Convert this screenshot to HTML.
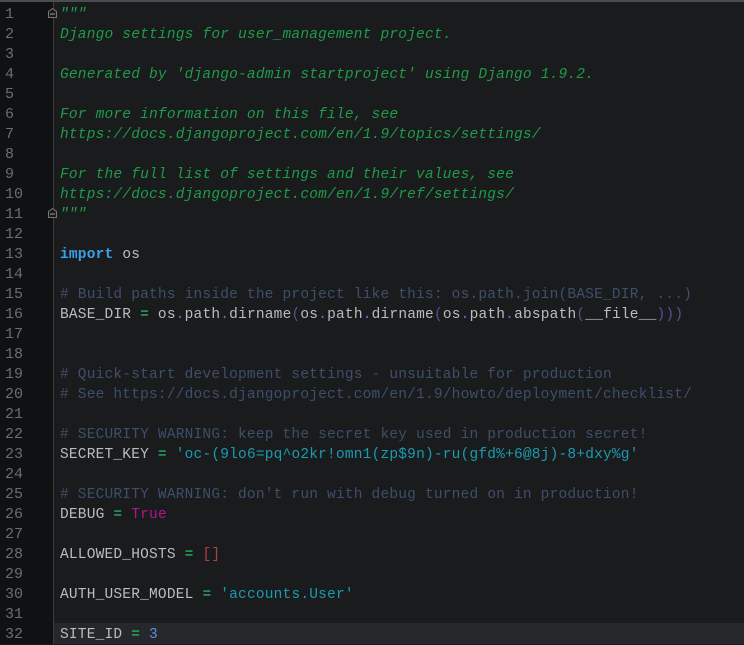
<!DOCTYPE html>
<html><head><meta charset="utf-8"><style>
html,body{margin:0;padding:0;}
body{width:744px;height:644px;background:#1a1b1d;overflow:hidden;position:relative;font-family:"Liberation Mono",monospace;font-size:14.5px;letter-spacing:0.2px;}
#top{position:absolute;left:0;top:0;width:744px;height:2px;background:#4a4d50;}
#gut{position:absolute;left:0;top:2px;width:53px;height:642px;background:#0f1112;}
#div{position:absolute;left:53px;top:2px;width:1px;height:642px;background:#3a3c3f;}
#hl{position:absolute;left:54px;top:623px;width:690px;height:21px;background:#25272b;}
.ln{position:absolute;left:5px;color:#6a6e73;height:20px;line-height:20px;margin-top:2px;font-size:15px;letter-spacing:0;}
.l{position:absolute;left:60px;height:20px;line-height:20px;white-space:pre;color:#b9bcc0;margin-top:2px;}
.d{color:#1f9b4a;font-style:italic;}
.c{color:#3d4f6a;}
.o{color:#2ecc71;}
.p{color:#3f7fcf;}
.pa{color:#5a4c9b;}
.t{color:#b3168f;}
.b{color:#b04040;}
.s{color:#1a9bb0;}
.n{color:#5a8fe0;}
.k{color:#3b9fe6;font-weight:bold;}
.fold{position:absolute;left:48px;width:9px;height:10px;}
</style></head><body>
<div id="top"></div><div id="gut"></div><div id="div"></div><div id="hl"></div>
<svg class="fold" style="top:8px" viewBox="0 0 9 10"><path d="M0.5 3.5 L4.5 0.5 L8.5 3.5 V9.5 H0.5 Z" fill="#1a1b1d" stroke="#777"/><path d="M2 6 H7" stroke="#999"/></svg>
<svg class="fold" style="top:208px" viewBox="0 0 9 10"><path d="M0.5 3.5 L4.5 0.5 L8.5 3.5 V9.5 H0.5 Z" fill="#1a1b1d" stroke="#777"/><path d="M2 6 H7" stroke="#999"/></svg>
<div class="ln" style="top:3px">1</div><div class="ln" style="top:23px">2</div><div class="ln" style="top:43px">3</div><div class="ln" style="top:63px">4</div><div class="ln" style="top:83px">5</div><div class="ln" style="top:103px">6</div><div class="ln" style="top:123px">7</div><div class="ln" style="top:143px">8</div><div class="ln" style="top:163px">9</div><div class="ln" style="top:183px">10</div><div class="ln" style="top:203px">11</div><div class="ln" style="top:223px">12</div><div class="ln" style="top:243px">13</div><div class="ln" style="top:263px">14</div><div class="ln" style="top:283px">15</div><div class="ln" style="top:303px">16</div><div class="ln" style="top:323px">17</div><div class="ln" style="top:343px">18</div><div class="ln" style="top:363px">19</div><div class="ln" style="top:383px">20</div><div class="ln" style="top:403px">21</div><div class="ln" style="top:423px">22</div><div class="ln" style="top:443px">23</div><div class="ln" style="top:463px">24</div><div class="ln" style="top:483px">25</div><div class="ln" style="top:503px">26</div><div class="ln" style="top:523px">27</div><div class="ln" style="top:543px">28</div><div class="ln" style="top:563px">29</div><div class="ln" style="top:583px">30</div><div class="ln" style="top:603px">31</div><div class="ln" style="top:623px">32</div>
<div class="l d" style="top:3px">"""</div>
<div class="l d" style="top:23px">Django settings for user_management project.</div>
<div class="l d" style="top:63px">Generated by 'django-admin startproject' using Django 1.9.2.</div>
<div class="l d" style="top:103px">For more information on this file, see</div>
<div class="l d" style="top:123px">https://docs.djangoproject.com/en/1.9/topics/settings/</div>
<div class="l d" style="top:163px">For the full list of settings and their values, see</div>
<div class="l d" style="top:183px">https://docs.djangoproject.com/en/1.9/ref/settings/</div>
<div class="l d" style="top:203px">"""</div>
<div class="l" style="top:243px"><span class="k">import</span> os</div>
<div class="l c" style="top:283px"># Build paths inside the project like this: os.path.join(BASE_DIR, ...)</div>
<div class="l" style="top:303px">BASE_DIR <span class="o">=</span> os<span class="p">.</span>path<span class="p">.</span>dirname<span class="pa">(</span>os<span class="p">.</span>path<span class="p">.</span>dirname<span class="pa">(</span>os<span class="p">.</span>path<span class="p">.</span>abspath<span class="pa">(</span>__file__<span class="pa">)))</span></div>
<div class="l c" style="top:363px"># Quick-start development settings - unsuitable for production</div>
<div class="l c" style="top:383px"># See https://docs.djangoproject.com/en/1.9/howto/deployment/checklist/</div>
<div class="l c" style="top:423px"># SECURITY WARNING: keep the secret key used in production secret!</div>
<div class="l" style="top:443px">SECRET_KEY <span class="o">=</span> <span class="s">'oc-(9lo6=pq^o2kr!omn1(zp$9n)-ru(gfd%+6@8j)-8+dxy%g'</span></div>
<div class="l c" style="top:483px"># SECURITY WARNING: don't run with debug turned on in production!</div>
<div class="l" style="top:503px">DEBUG <span class="o">=</span> <span class="t">True</span></div>
<div class="l" style="top:543px">ALLOWED_HOSTS <span class="o">=</span> <span class="b">[]</span></div>
<div class="l" style="top:583px">AUTH_USER_MODEL <span class="o">=</span> <span class="s">'accounts.User'</span></div>
<div class="l" style="top:623px">SITE_ID <span class="o">=</span> <span class="n">3</span></div>
</body></html>
